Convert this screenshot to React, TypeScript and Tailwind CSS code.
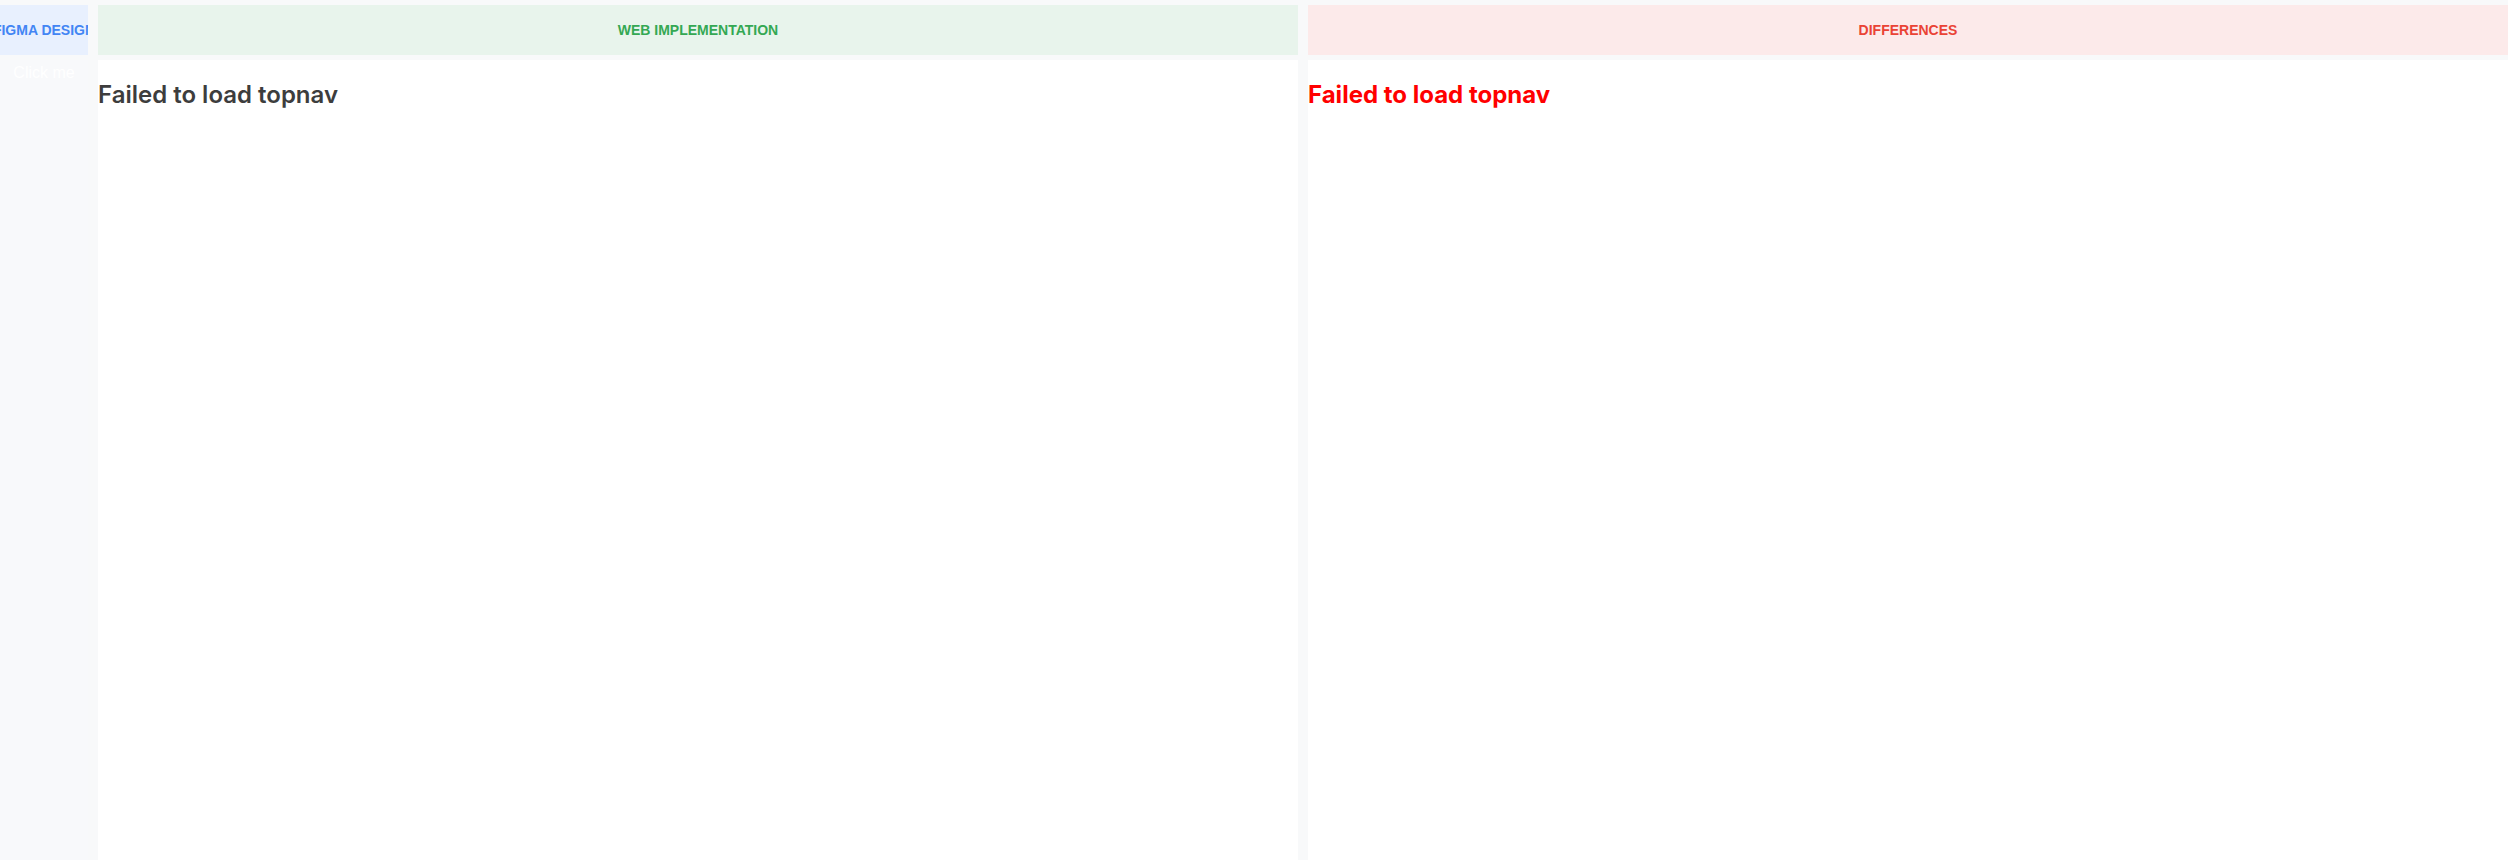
import type { ReactNode } from "react";

type Tone = "blue" | "green" | "red";

const headerTone: Record<Tone, string> = {
  blue: "bg-[#e8f0fe] text-[#4285f4]",
  green: "bg-[#e8f4ec] text-[#34a853]",
  red: "bg-[#fceaea] text-[#ea4335]",
};

function Column({
  title,
  tone,
  className,
  bodyClassName,
  children,
}: {
  title: string;
  tone: Tone;
  className: string;
  bodyClassName: string;
  children?: ReactNode;
}) {
  return (
    <div className={`flex shrink-0 flex-col ${className}`}>
      {/* Column header */}
      <div
        className={`flex h-[50px] shrink-0 items-center justify-center overflow-hidden whitespace-nowrap font-['Liberation_Sans',Arial,sans-serif] text-[14px] font-bold uppercase ${headerTone[tone]}`}
      >
        {title}
      </div>
      <div className={`mt-[5px] flex-1 ${bodyClassName}`}>{children}</div>
    </div>
  );
}

export default function App() {
  return (
    <div className="flex h-[860px] w-[2508px] gap-[10px] overflow-hidden bg-[#f8f9fa] pt-[5px]">
      {/* Figma design (scrolled mostly out of view) */}
      <Column
        title="Figma Design"
        tone="blue"
        className="w-[88px]"
        bodyClassName="bg-[#f8f9fb]"
      >
        <div className="pt-[4px] text-center font-['Liberation_Sans',Arial,sans-serif] text-[16px] leading-[18px] text-white">
          Click me
        </div>
      </Column>

      {/* Web implementation */}
      <Column
        title="Web Implementation"
        tone="green"
        className="w-[1200px]"
        bodyClassName="bg-white"
      >
        <h2 className="mt-[17px] font-['Inter',sans-serif] text-[24px] leading-[36px] font-semibold text-[#3d3d3d]">
          Failed to load topnav
        </h2>
      </Column>

      {/* Differences */}
      <Column
        title="Differences"
        tone="red"
        className="w-[1200px]"
        bodyClassName="bg-white"
      >
        <h2 className="mt-[17px] font-['Inter',sans-serif] text-[24px] leading-[36px] font-bold text-[#ff0000]">
          Failed to load topnav
        </h2>
      </Column>
    </div>
  );
}
